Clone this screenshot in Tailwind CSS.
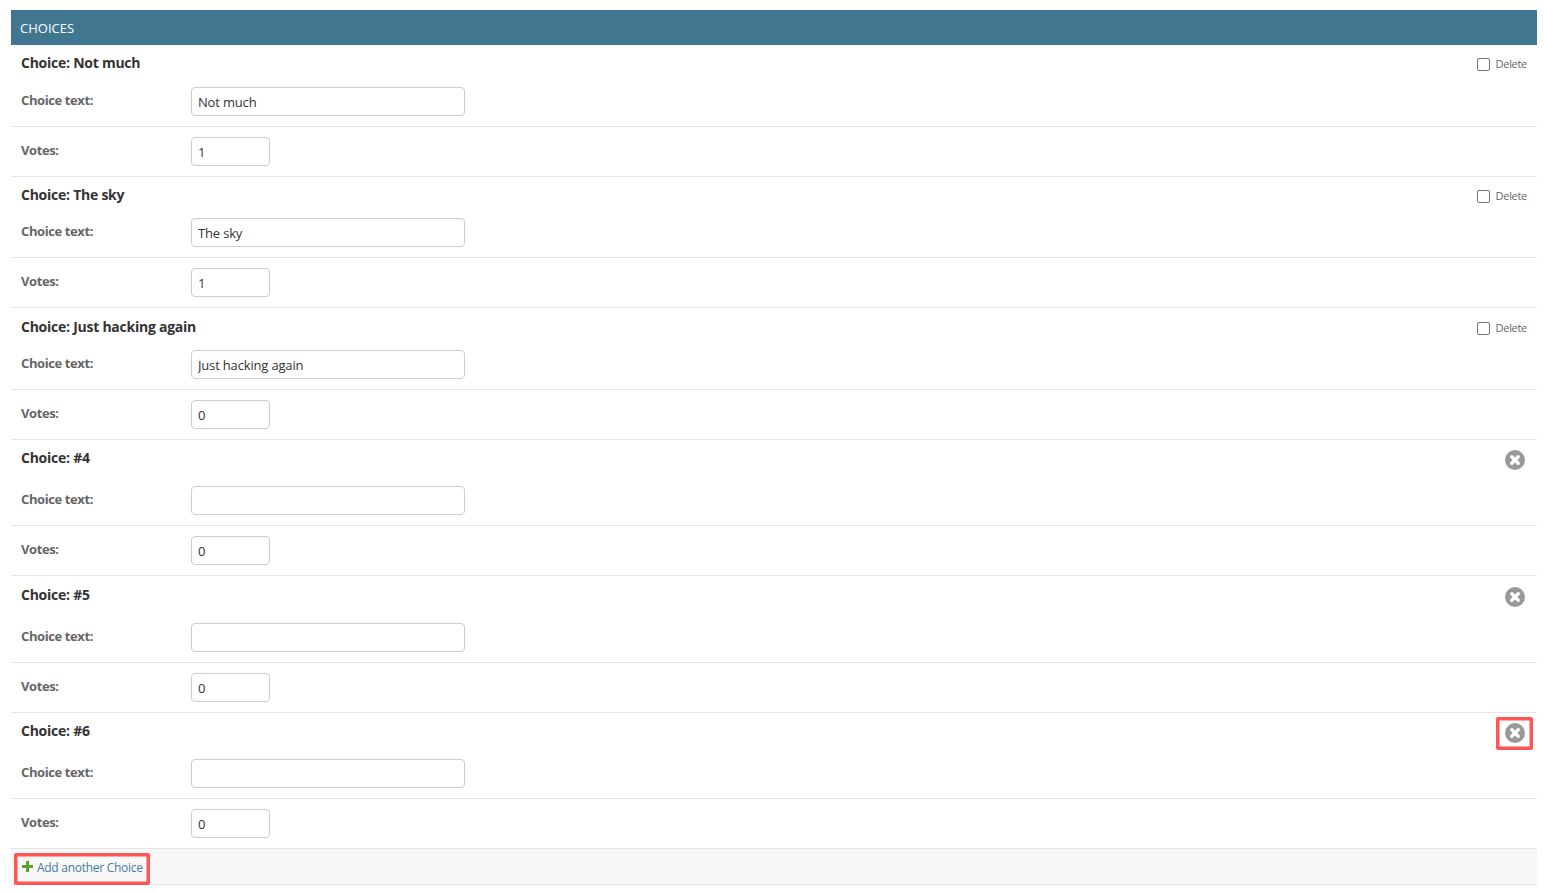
<!DOCTYPE html>
<html lang="en">

<head>
  <meta charset="UTF-8">
  <meta name="viewport" content="width=device-width, initial-scale=1.0">
  <title>Choices</title>
  <script src="https://cdn.jsdelivr.net/npm/@tailwindcss/browser@4"></script>
</head>

<body class="bg-white h-[892px] overflow-hidden font-['Open_Sans',sans-serif] text-[13px] text-[#333]">
  <div class="relative pt-[10px] pl-[11px] pr-[7px]">
    <h2 class="h-[35px] bg-[#417690] text-white text-[13px] leading-[36px] pl-[9px] uppercase">Choices</h2>

    <!-- Saved choices -->
    <section>
      <div class="h-[31.6px] flex justify-between items-start pl-[10px] pr-[10px]">
        <h3 class="text-[14px] leading-[36.9px] tracking-[-0.25px] font-bold h-[36px]">Choice: Not much</h3>
        <label class="flex items-center gap-[6px] text-[11px] tracking-[-0.3px] text-[#666] h-[38.9px]"><span class="w-[13px] h-[13px] rounded-[2px] border border-[#767676] bg-white"></span>Delete</label>
      </div>
      <div class="h-[50px] border-b border-[#e5e5e5] pl-[10px] pt-[10px] flex">
        <label class="w-[170px] font-bold text-[#666] leading-[27px] tracking-[-0.4px]">Choice text:</label>
        <input type="text" value="Not much" class="w-[274px] h-[29px] border border-[#ccc] rounded-[4px] px-[6px] pt-[1px] text-[#333] text-[13px] tracking-[-0.17px]">
      </div>
      <div class="h-[50px] border-b border-[#e5e5e5] pl-[10px] pt-[10px] flex">
        <label class="w-[170px] font-bold text-[#666] leading-[27px] tracking-[-0.4px]">Votes:</label>
        <input type="text" value="1" class="w-[79px] h-[29px] border border-[#ccc] rounded-[4px] px-[6px] pt-[1px] text-[#333] text-[13px]">
      </div>
    </section>

    <section>
      <div class="h-[31.6px] flex justify-between items-start pl-[10px] pr-[10px]">
        <h3 class="text-[14px] leading-[36.9px] tracking-[-0.25px] font-bold h-[36px]">Choice: The sky</h3>
        <label class="flex items-center gap-[6px] text-[11px] tracking-[-0.3px] text-[#666] h-[38.9px]"><span class="w-[13px] h-[13px] rounded-[2px] border border-[#767676] bg-white"></span>Delete</label>
      </div>
      <div class="h-[50px] border-b border-[#e5e5e5] pl-[10px] pt-[10px] flex">
        <label class="w-[170px] font-bold text-[#666] leading-[27px] tracking-[-0.4px]">Choice text:</label>
        <input type="text" value="The sky" class="w-[274px] h-[29px] border border-[#ccc] rounded-[4px] px-[6px] pt-[1px] text-[#333] text-[13px] tracking-[-0.17px]">
      </div>
      <div class="h-[50px] border-b border-[#e5e5e5] pl-[10px] pt-[10px] flex">
        <label class="w-[170px] font-bold text-[#666] leading-[27px] tracking-[-0.4px]">Votes:</label>
        <input type="text" value="1" class="w-[79px] h-[29px] border border-[#ccc] rounded-[4px] px-[6px] pt-[1px] text-[#333] text-[13px]">
      </div>
    </section>

    <section>
      <div class="h-[31.6px] flex justify-between items-start pl-[10px] pr-[10px]">
        <h3 class="text-[14px] leading-[38.9px] tracking-[-0.25px] font-bold h-[36px]">Choice: Just hacking again</h3>
        <label class="flex items-center gap-[6px] text-[11px] tracking-[-0.3px] text-[#666] h-[40.9px]"><span class="w-[13px] h-[13px] rounded-[2px] border border-[#767676] bg-white"></span>Delete</label>
      </div>
      <div class="h-[50px] border-b border-[#e5e5e5] pl-[10px] pt-[10px] flex">
        <label class="w-[170px] font-bold text-[#666] leading-[27px] tracking-[-0.4px]">Choice text:</label>
        <input type="text" value="Just hacking again" class="w-[274px] h-[29px] border border-[#ccc] rounded-[4px] px-[6px] pt-[1px] text-[#333] text-[13px] tracking-[-0.17px]">
      </div>
      <div class="h-[50px] border-b border-[#e5e5e5] pl-[10px] pt-[10px] flex">
        <label class="w-[170px] font-bold text-[#666] leading-[27px] tracking-[-0.4px]">Votes:</label>
        <input type="text" value="0" class="w-[79px] h-[29px] border border-[#ccc] rounded-[4px] px-[6px] pt-[1px] text-[#333] text-[13px]">
      </div>
    </section>

    <!-- Extra empty forms -->
    <section>
      <div class="h-[36.4px] flex justify-between items-start pl-[10px] pr-[11px]">
        <h3 class="text-[14px] leading-[36.9px] tracking-[-0.25px] font-bold h-[36px]">Choice: #4</h3>
        <svg class="mt-[9.6px]" width="22" height="22" viewBox="0 0 22 22"><circle cx="11" cy="11" r="10" fill="#999"/><path d="M7.8 7.8l6.4 6.4M14.2 7.8l-6.4 6.4" stroke="#fff" stroke-width="3.4" stroke-linecap="round"/></svg>
      </div>
      <div class="h-[50px] border-b border-[#e5e5e5] pl-[10px] pt-[10px] flex">
        <label class="w-[170px] font-bold text-[#666] leading-[27px] tracking-[-0.4px]">Choice text:</label>
        <input type="text" class="w-[274px] h-[29px] border border-[#ccc] rounded-[4px] px-[6px] text-[#333] text-[13px]">
      </div>
      <div class="h-[50px] border-b border-[#e5e5e5] pl-[10px] pt-[10px] flex">
        <label class="w-[170px] font-bold text-[#666] leading-[27px] tracking-[-0.4px]">Votes:</label>
        <input type="text" value="0" class="w-[79px] h-[29px] border border-[#ccc] rounded-[4px] px-[6px] pt-[1px] text-[#333] text-[13px]">
      </div>
    </section>

    <section>
      <div class="h-[36.4px] flex justify-between items-start pl-[10px] pr-[11px]">
        <h3 class="text-[14px] leading-[38.9px] tracking-[-0.25px] font-bold h-[36px]">Choice: #5</h3>
        <svg class="mt-[9.6px]" width="22" height="22" viewBox="0 0 22 22"><circle cx="11" cy="11" r="10" fill="#999"/><path d="M7.8 7.8l6.4 6.4M14.2 7.8l-6.4 6.4" stroke="#fff" stroke-width="3.4" stroke-linecap="round"/></svg>
      </div>
      <div class="h-[50px] border-b border-[#e5e5e5] pl-[10px] pt-[10px] flex">
        <label class="w-[170px] font-bold text-[#666] leading-[27px] tracking-[-0.4px]">Choice text:</label>
        <input type="text" class="w-[274px] h-[29px] border border-[#ccc] rounded-[4px] px-[6px] text-[#333] text-[13px]">
      </div>
      <div class="h-[50px] border-b border-[#e5e5e5] pl-[10px] pt-[10px] flex">
        <label class="w-[170px] font-bold text-[#666] leading-[27px] tracking-[-0.4px]">Votes:</label>
        <input type="text" value="0" class="w-[79px] h-[29px] border border-[#ccc] rounded-[4px] px-[6px] pt-[1px] text-[#333] text-[13px]">
      </div>
    </section>

    <section>
      <div class="h-[36.4px] flex justify-between items-start pl-[10px] pr-[11px]">
        <h3 class="text-[14px] leading-[36.9px] tracking-[-0.25px] font-bold h-[36px]">Choice: #6</h3>
        <svg class="mt-[9.6px]" width="22" height="22" viewBox="0 0 22 22"><circle cx="11" cy="11" r="10" fill="#999"/><path d="M7.8 7.8l6.4 6.4M14.2 7.8l-6.4 6.4" stroke="#fff" stroke-width="3.4" stroke-linecap="round"/></svg>
      </div>
      <div class="h-[50px] border-b border-[#e5e5e5] pl-[10px] pt-[10px] flex">
        <label class="w-[170px] font-bold text-[#666] leading-[27px] tracking-[-0.4px]">Choice text:</label>
        <input type="text" class="w-[274px] h-[29px] border border-[#ccc] rounded-[4px] px-[6px] text-[#333] text-[13px]">
      </div>
      <div class="h-[50px] border-b border-[#e5e5e5] pl-[10px] pt-[10px] flex">
        <label class="w-[170px] font-bold text-[#666] leading-[27px] tracking-[-0.4px]">Votes:</label>
        <input type="text" value="0" class="w-[79px] h-[29px] border border-[#ccc] rounded-[4px] px-[6px] pt-[1px] text-[#333] text-[13px]">
      </div>
    </section>

    <div class="h-[36px] bg-[#f8f8f8] border-b border-[#e5e5e5] flex items-center pl-[11px] pt-[3px] gap-[4px] text-[12px] tracking-[-0.28px] text-[#447e9b]">
      <svg class="-mt-[2px]" width="11" height="11" viewBox="0 0 11 11"><path d="M4 0h3v4h4v3H7v4H4V7H0V4h4z" fill="#5fa225"/></svg>
      <a href="#">Add another Choice</a>
    </div>

    <!-- Red annotation boxes drawn over the screenshot -->
    <div class="absolute left-[14px] top-[853px] w-[136px] h-[32px] border-[3px] border-[#f55] rounded-[2px] shadow-[inset_0_0_0_0.5px_#f55]"></div>
    <div class="absolute left-[1496px] top-[717px] w-[37px] h-[33px] border-[3px] border-[#f55] rounded-[2px] shadow-[inset_0_0_0_0.5px_#f55]"></div>
  </div>
</body>

</html>
